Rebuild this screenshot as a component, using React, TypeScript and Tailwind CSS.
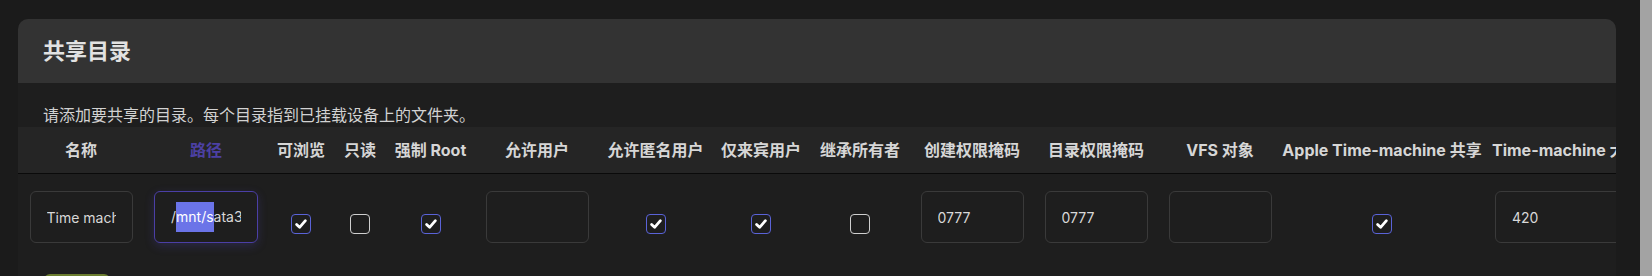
import React from "react";

const FONT = {
  fontFamily: '"Inter", "Noto Sans CJK SC", "Noto Sans", sans-serif',
};

function Check({ checked }: { checked: boolean }) {
  if (!checked) {
    return (
      <div className="w-[20px] h-[20px] rounded-[4px] border-[1.5px] border-[#cfcfcf] bg-[#1e1e1e]" />
    );
  }
  return (
    <div className="w-[20px] h-[20px] rounded-[4px] border-[1.5px] border-[#5a63d8] bg-[#1e1e1e] flex items-center justify-center">
      <svg width="14" height="14" viewBox="0 0 14 14">
        <path
          d="M2.6 7.4 L5.6 10.3 L11.4 3.7"
          fill="none"
          stroke="#ffffff"
          strokeWidth="2.8"
          strokeLinecap="round"
          strokeLinejoin="round"
        />
      </svg>
    </div>
  );
}

function TextBox({
  value,
  width = "w-[103px]",
  focused = false,
}: {
  value?: React.ReactNode;
  width?: string;
  focused?: boolean;
}) {
  return (
    <div
      className={
        width +
        " h-[52px] rounded-[6px] border flex items-center px-[16px] overflow-hidden whitespace-nowrap text-[14px] text-[#d8d8d8] " +
        (focused
          ? "border-[#4b3fa6] shadow-[0_3px_10px_rgba(80,70,190,0.25)]"
          : "border-[#3a3a3a]")
      }
    >
      <div className="overflow-hidden whitespace-nowrap w-full">{value}</div>
    </div>
  );
}

type Col = {
  w: string;
  label: string;
  kind: "text" | "check";
  value?: React.ReactNode;
  checked?: boolean;
  accent?: boolean;
  inputW?: string;
  focused?: boolean;
};

const cols: Col[] = [
  { w: "w-[126px]", label: "名称", kind: "text", value: "Time machine" },
  {
    w: "w-[124px]",
    label: "路径",
    kind: "text",
    accent: true,
    focused: true,
    value: (
      <span>
        /
        <span className="inline-block bg-[#6b74e8] text-white leading-[30px]">mnt/s</span>
        ata3
      </span>
    ),
  },
  { w: "w-[66px]", label: "可浏览", kind: "check", checked: true },
  { w: "w-[52px]", label: "只读", kind: "check", checked: false },
  { w: "w-[89px]", label: "强制 Root", kind: "check", checked: true },
  { w: "w-[124px]", label: "允许用户", kind: "text", value: "" },
  { w: "w-[113px]", label: "允许匿名用户", kind: "check", checked: true },
  { w: "w-[98px]", label: "仅来宾用户", kind: "check", checked: true },
  { w: "w-[100px]", label: "继承所有者", kind: "check", checked: false },
  { w: "w-[124px]", label: "创建权限掩码", kind: "text", value: "0777" },
  { w: "w-[124px]", label: "目录权限掩码", kind: "text", value: "0777" },
  { w: "w-[124px]", label: "VFS 对象", kind: "text", value: "" },
  { w: "w-[200px]", label: "Apple Time-machine 共享", kind: "check", checked: true },
];

export default function App() {
  return (
    <div
      className="w-[1652px] h-[276px] overflow-hidden bg-[#1b1b1b] flex"
      style={FONT}
    >
      <div className="flex-1 min-w-0 pl-[18px] pr-[24px] pt-[19px] overflow-hidden">
        <div className="rounded-t-[10px] bg-[#1e1e1e] overflow-hidden h-[300px]">
          <div className="h-[64px] bg-[#333333] flex items-center pl-[25px] text-[22px] font-bold text-[#e2e2e2]">
            共享目录
          </div>
          <div className="pt-[20px] pl-[25px] text-[16px] leading-[24px] text-[#d2d2d2] whitespace-nowrap">
            请添加要共享的目录。每个目录指到已挂载设备上的文件夹。
          </div>
          <div className="flex h-[47px] bg-[#252525] border-b border-[#0a0a0a] items-center w-max min-w-full">
            {cols.map((c, i) => (
              <div
                key={i}
                className={
                  c.w +
                  " shrink-0 flex justify-center whitespace-nowrap text-[16px] font-bold " +
                  (c.accent ? "text-[#4c40a3]" : "text-[#d6d6d6]")
                }
              >
                {c.label}
              </div>
            ))}
            <div className="w-[180px] shrink-0 pl-[10px] whitespace-nowrap text-[16px] font-bold text-[#d6d6d6]">
              Time-machine 大小
            </div>
          </div>
          <div className="flex items-start w-max">
            {cols.map((c, i) => (
              <div
                key={i}
                className={
                  c.w +
                  " shrink-0 flex justify-center " +
                  (c.kind === "check" ? "pt-[40px]" : "pt-[17px]")
                }
              >
                {c.kind === "check" ? (
                  <Check checked={!!c.checked} />
                ) : (
                  <TextBox value={c.value} focused={c.focused} width={i === 1 ? "w-[104px]" : "w-[103px]"} />
                )}
              </div>
            ))}
            <div className="w-[180px] shrink-0 pt-[17px] pl-[13px]">
              <TextBox value="420" width="w-[150px]" />
            </div>
          </div>
          <div className="pl-[26px] pt-[31px]">
            <div className="w-[66px] h-[30px] rounded-[6px] bg-[#6b7d2f]" />
          </div>
        </div>
      </div>
      <div className="w-[12px] h-[276px] bg-[#a3a3a3] shrink-0" />
    </div>
  );
}
